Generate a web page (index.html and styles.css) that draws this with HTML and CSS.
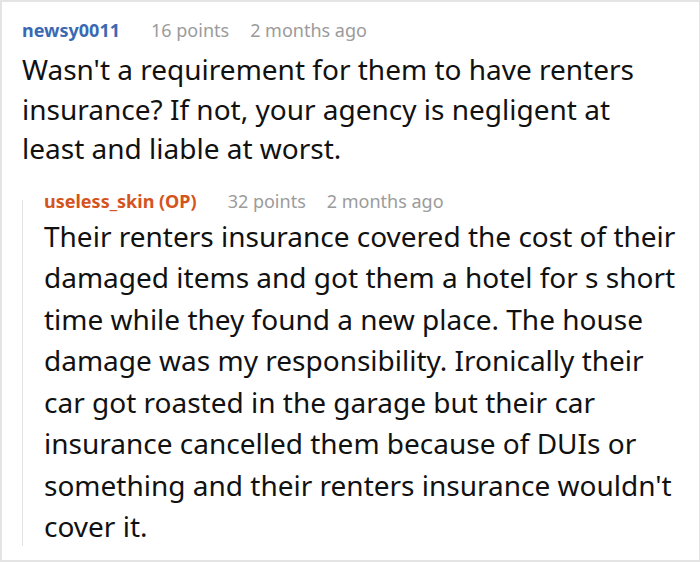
FILE: index.html
```html
<!DOCTYPE html>
<html>
<head>
<meta charset="utf-8">
<link rel="stylesheet" href="styles.css">
</head>
<body>
<div class="frame">
  <div class="comment">
    <div class="meta">
      <span class="user">newsy0011</span>
      <span class="info">16 points</span>
      <span class="info">2 months ago</span>
    </div>
    <p class="text top">Wasn't a requirement for them to have renters insurance? If not, your agency is negligent at least and liable at worst.</p>
    <div class="reply">
      <div class="thread"></div>
      <div class="reply-body">
        <div class="meta">
          <span class="user op">useless_skin (OP)</span>
          <span class="info">32 points</span>
          <span class="info">2 months ago</span>
        </div>
        <p class="text sub">Their renters insurance covered the cost of their damaged items and got them a hotel for s short time while they found a new place. The house damage was my responsibility. Ironically their car got roasted in the garage but their car insurance cancelled them because of DUIs or something and their renters insurance wouldn't cover it.</p>
      </div>
    </div>
  </div>
</div>
</body>
</html>
```
FILE: styles.css
```css
html, body {
  margin: 0;
  padding: 0;
  background: #fff;
}
body {
  font-family: "Noto Sans", "Open Sans", sans-serif;
  color: #111;
}
.frame {
  width: 700px;
  height: 562px;
  box-sizing: border-box;
  border-style: solid;
  border-color: #e4e4e4;
  border-width: 2px 1px 2px 2px;
  overflow: hidden;
}
.comment {
  padding: 16px 0 0 20px;
}
.meta {
  display: flex;
  gap: 21px;
  align-items: baseline;
  font-size: 18px;
  line-height: 24px;
  white-space: nowrap;
}
.user {
  font-weight: 700;
  color: #3a69b4;
  margin-right: 10px;
}
.user.op {
  color: #d5531c;
}
.info {
  color: #9b9b9b;
}
.text {
  margin: 0;
  font-size: 28px;
}
.text.top {
  width: 640px;
  line-height: 39.5px;
  margin-top: 8px;
}
.reply {
  display: flex;
  gap: 21px;
  margin-top: 20px;
}
.thread {
  width: 1px;
  flex: none;
  background: #e2e2e2;
  margin-top: 11px;
  margin-bottom: 2px;
}
.reply-body {
  flex: 1;
}
.text.sub {
  width: 634px;
  line-height: 41.5px;
  margin-top: 3px;
}
```
